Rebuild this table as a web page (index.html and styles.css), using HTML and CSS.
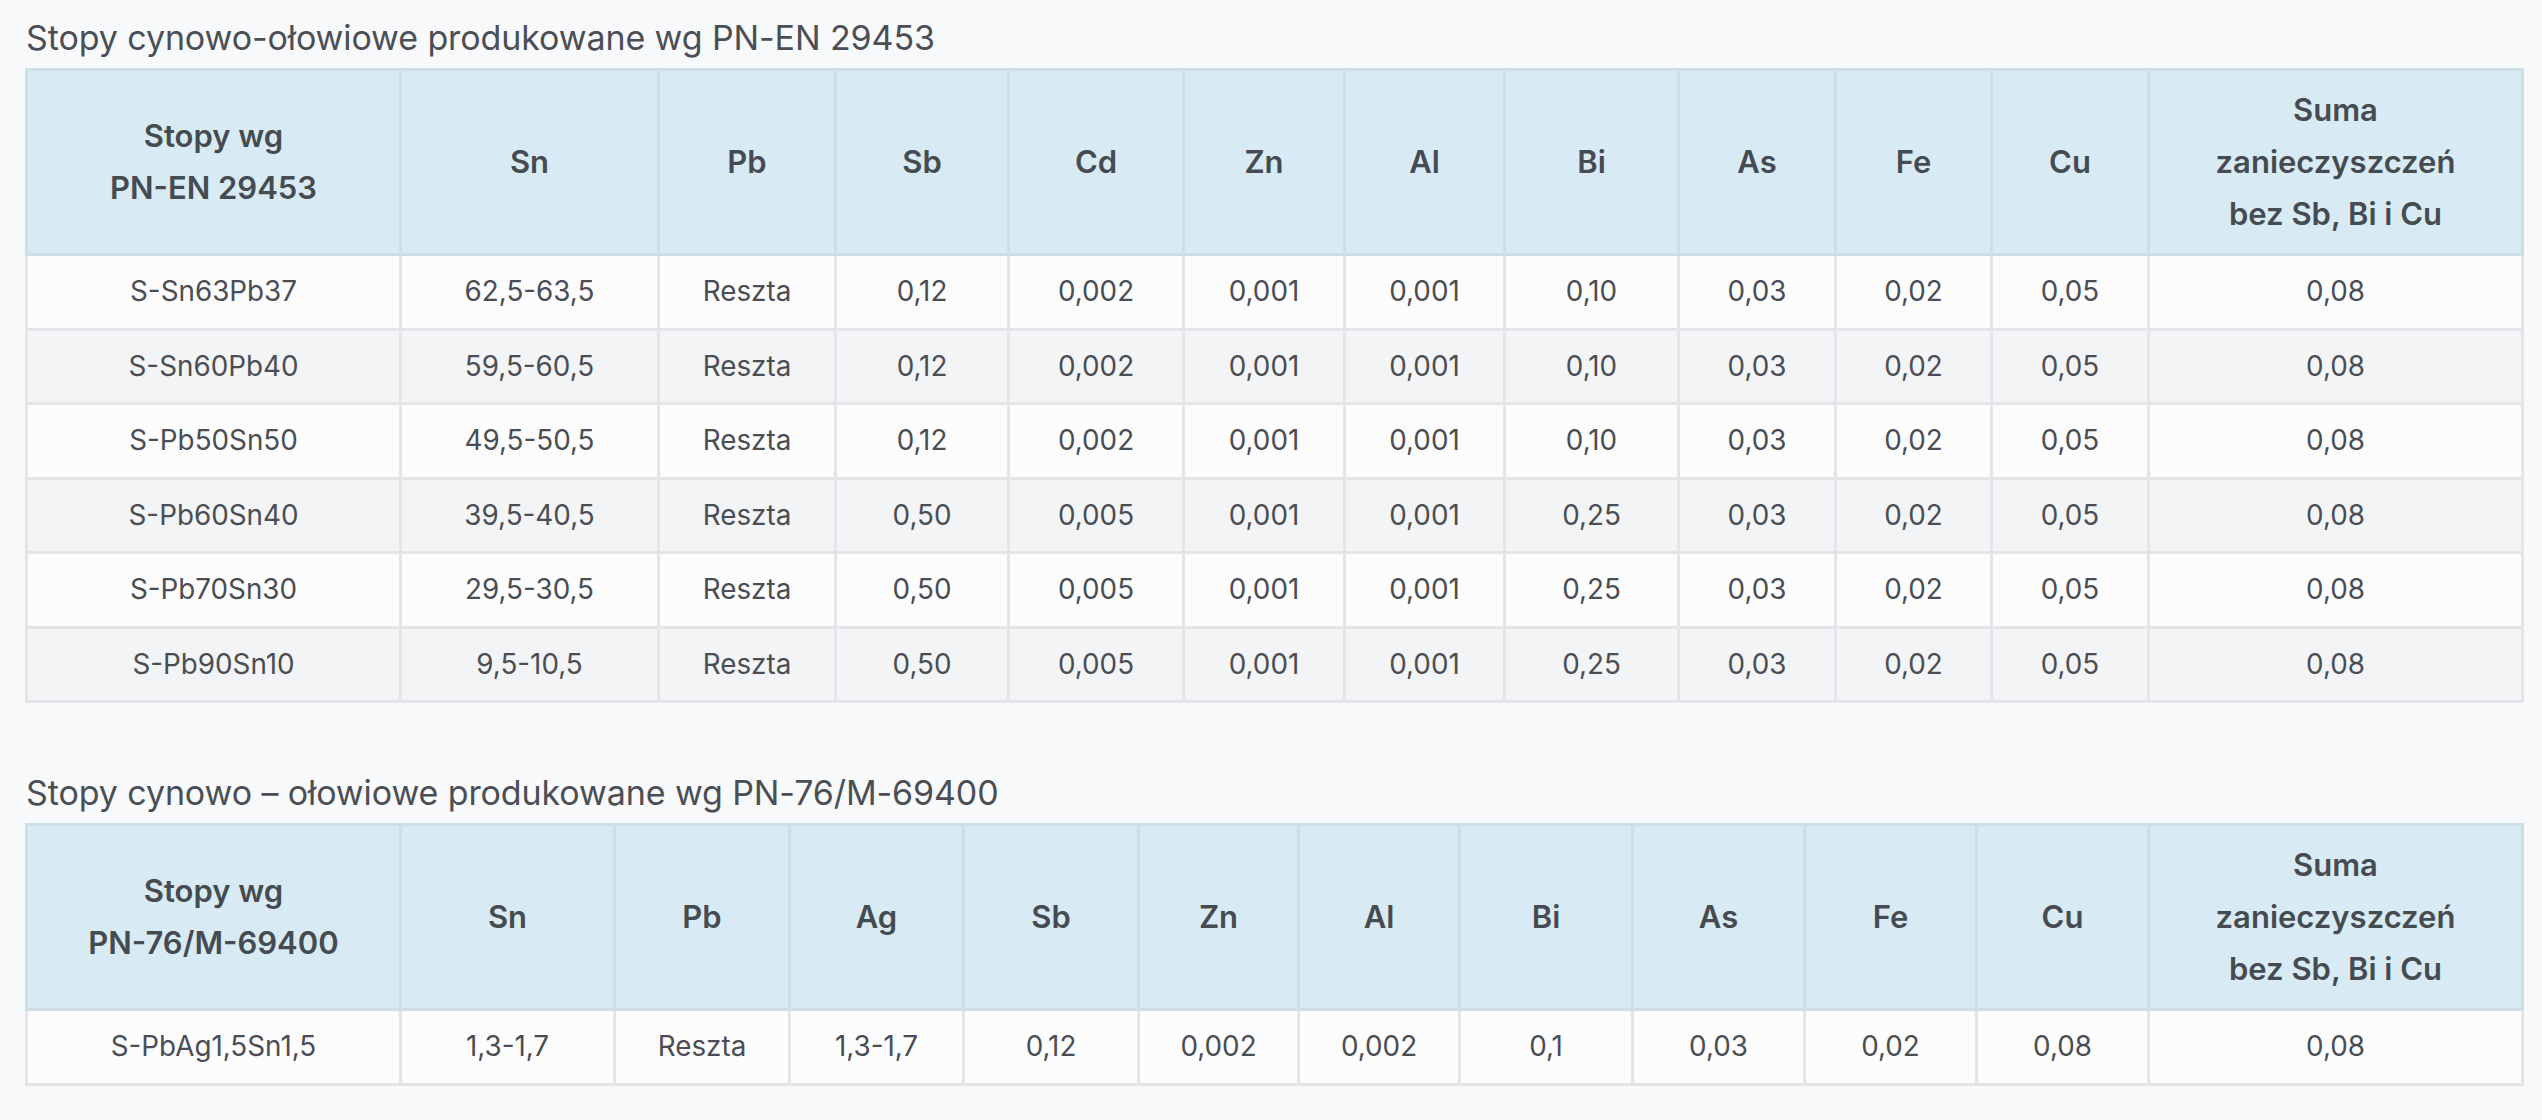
FILE: index.html
```html
<!DOCTYPE html>
<html lang="pl">
<head>
<meta charset="utf-8">
<title>Stopy cynowo-ołowiowe</title>
<link rel="stylesheet" href="styles.css">
</head>
<body>
<main class="page">
  <section class="block">
    <h2 class="block-title">Stopy cynowo-ołowiowe produkowane wg PN-EN 29453</h2>
    <table class="alloy-table">
      <colgroup>
        <col class="c374"><col class="c258"><col class="c177"><col class="c173"><col class="c175"><col class="c161"><col class="c160"><col class="c174"><col class="c157"><col class="c156"><col class="c157"><col class="c374">
      </colgroup>
      <thead>
        <tr>
          <th>Stopy wg<br>PN-EN 29453</th>
          <th>Sn</th><th>Pb</th><th>Sb</th><th>Cd</th><th>Zn</th><th>Al</th><th>Bi</th><th>As</th><th>Fe</th><th>Cu</th>
          <th>Suma<br>zanieczyszczeń<br>bez Sb, Bi i Cu</th>
        </tr>
      </thead>
      <tbody>
        <tr><td>S-Sn63Pb37</td><td>62,5-63,5</td><td>Reszta</td><td>0,12</td><td>0,002</td><td>0,001</td><td>0,001</td><td>0,10</td><td>0,03</td><td>0,02</td><td>0,05</td><td>0,08</td></tr>
        <tr><td>S-Sn60Pb40</td><td>59,5-60,5</td><td>Reszta</td><td>0,12</td><td>0,002</td><td>0,001</td><td>0,001</td><td>0,10</td><td>0,03</td><td>0,02</td><td>0,05</td><td>0,08</td></tr>
        <tr><td>S-Pb50Sn50</td><td>49,5-50,5</td><td>Reszta</td><td>0,12</td><td>0,002</td><td>0,001</td><td>0,001</td><td>0,10</td><td>0,03</td><td>0,02</td><td>0,05</td><td>0,08</td></tr>
        <tr><td>S-Pb60Sn40</td><td>39,5-40,5</td><td>Reszta</td><td>0,50</td><td>0,005</td><td>0,001</td><td>0,001</td><td>0,25</td><td>0,03</td><td>0,02</td><td>0,05</td><td>0,08</td></tr>
        <tr><td>S-Pb70Sn30</td><td>29,5-30,5</td><td>Reszta</td><td>0,50</td><td>0,005</td><td>0,001</td><td>0,001</td><td>0,25</td><td>0,03</td><td>0,02</td><td>0,05</td><td>0,08</td></tr>
        <tr><td>S-Pb90Sn10</td><td>9,5-10,5</td><td>Reszta</td><td>0,50</td><td>0,005</td><td>0,001</td><td>0,001</td><td>0,25</td><td>0,03</td><td>0,02</td><td>0,05</td><td>0,08</td></tr>
      </tbody>
    </table>
  </section>

  <section class="block block-second">
    <h2 class="block-title">Stopy cynowo – ołowiowe produkowane wg PN-76/M-69400</h2>
    <table class="alloy-table">
      <colgroup>
        <col class="c374"><col class="c214"><col class="c175"><col class="c174"><col class="c175"><col class="c160"><col class="c161"><col class="c173"><col class="c172"><col class="c172"><col class="c172"><col class="c374">
      </colgroup>
      <thead>
        <tr>
          <th>Stopy wg<br>PN-76/M-69400</th>
          <th>Sn</th><th>Pb</th><th>Ag</th><th>Sb</th><th>Zn</th><th>Al</th><th>Bi</th><th>As</th><th>Fe</th><th>Cu</th>
          <th>Suma<br>zanieczyszczeń<br>bez Sb, Bi i Cu</th>
        </tr>
      </thead>
      <tbody>
        <tr><td>S-PbAg1,5Sn1,5</td><td>1,3-1,7</td><td>Reszta</td><td>1,3-1,7</td><td>0,12</td><td>0,002</td><td>0,002</td><td>0,1</td><td>0,03</td><td>0,02</td><td>0,08</td><td>0,08</td></tr>
      </tbody>
    </table>
  </section>
</main>
</body>
</html>
```

FILE: styles.css
```css
html, body {
  margin: 0;
  padding: 0;
  background: #f8f9fb;
}

.page {
  padding: 18px 20px 0 25px;
  font-family: Inter, "Noto Sans", "Liberation Sans", sans-serif;
  color: #4a4e54;
}

.block-title {
  margin: 0 0 10px 1px;
  font-size: 34px;
  line-height: 40px;
  font-weight: 400;
  color: #4b4f55;
  letter-spacing: -0.1px;
}

.block-second {
  margin-top: 70px;
}

.alloy-table {
  width: 2497px;
  table-layout: fixed;
  border-collapse: collapse;
}

.alloy-table th {
  background: #d8ebf4;
  border: 3px solid #cddee7;
  font-size: 31px;
  line-height: 52px;
  font-weight: 600;
  color: #464b51;
  padding: 13px 6px;
  text-align: center;
  vertical-align: middle;
}

.alloy-table td {
  border: 3px solid #e3e5e8;
  font-size: 27.8px;
  line-height: 37px;
  font-weight: 400;
  color: #4a4e54;
  padding: 17.25px 6px;
  text-align: center;
  vertical-align: middle;
}

.alloy-table tbody tr:nth-child(odd) td {
  background: #fcfcfd;
}

.alloy-table tbody tr:nth-child(even) td {
  background: #f3f4f5;
}

.c374 { width: 374px; }
.c258 { width: 258px; }
.c214 { width: 214px; }
.c177 { width: 177px; }
.c175 { width: 175px; }
.c174 { width: 174px; }
.c173 { width: 173px; }
.c172 { width: 172px; }
.c161 { width: 161px; }
.c160 { width: 160px; }
.c157 { width: 157px; }
.c156 { width: 156px; }
```
